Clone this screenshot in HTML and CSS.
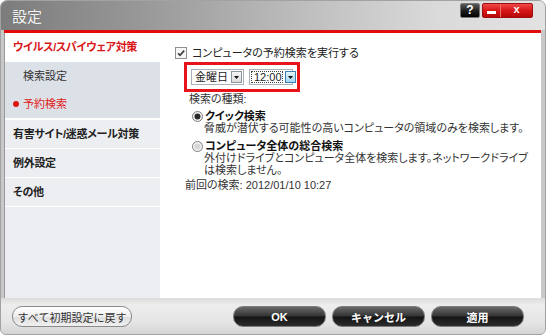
FILE: index.html
```html
<!DOCTYPE html>
<html lang="ja">
<head>
    <meta charset="UTF-8">
    <title>設定</title>
    <link rel="stylesheet" href="styles.css">
</head>
<body>
<div class="window">
    <div class="titlebar">
        <span class="title">設定</span>
        <div class="title-buttons">
            <span class="tb-help">?</span>
            <div class="tb-red">
                <span class="tb-min"><span class="bar"></span></span>
                <span class="tb-close">x</span>
            </div>
        </div>
    </div>

    <div class="main">
        <nav class="sidebar">
            <div class="nav-item active">ウイルス/スパイウェア対策</div>
            <div class="nav-sub">
                <div class="sub-item">検索設定</div>
                <div class="sub-item current"><span class="dot"></span>予約検索</div>
            </div>
            <div class="nav-item">有害サイト/迷惑メール対策</div>
            <div class="nav-item">例外設定</div>
            <div class="nav-item">その他</div>
        </nav>

        <section class="content">
            <div class="check-row">
                <svg class="checkbox" width="12" height="12" viewBox="0 0 12 12">
                    <rect x="0.5" y="0.5" width="11" height="11" fill="#f6f6f6" stroke="#8e8f8f"/>
                    <path d="M3 6.2 L5 8.4 L9.2 3.6" fill="none" stroke="#3a3a3a" stroke-width="1.6"/>
                </svg>
                <span>コンピュータの予約検索を実行する</span>
            </div>

            <div class="schedule">
                <div class="select day">
                    <span class="value">金曜日</span>
                    <span class="arrow">
                        <svg width="9" height="10" viewBox="0 0 9 10"><path d="M2 4 H7 L4.5 7 Z" fill="#111"/></svg>
                    </span>
                </div>
                <div class="select time">
                    <span class="value focus">12:00</span>
                    <span class="arrow hot">
                        <svg width="9" height="10" viewBox="0 0 9 10"><path d="M2 4 H7 L4.5 7 Z" fill="#111"/></svg>
                    </span>
                </div>
            </div>

            <div class="group-label">検索の種類:</div>

            <div class="option first">
                <div class="option-title">
                    <svg class="radio" width="11" height="11" viewBox="0 0 11 11">
                        <circle cx="5.5" cy="5.5" r="5" fill="#f2f2f2" stroke="#7d7d7d"/>
                        <circle cx="5.5" cy="5.5" r="3" fill="#2a2a2a"/>
                    </svg>
                    <strong>クイック検索</strong>
                </div>
                <p class="option-desc">脅威が潜伏する可能性の高いコンピュータの領域のみを検索します。</p>
            </div>

            <div class="option">
                <div class="option-title">
                    <svg class="radio" width="11" height="11" viewBox="0 0 11 11">
                        <circle cx="5.5" cy="5.5" r="5" fill="#f2f2f2" stroke="#7d7d7d"/>
                        <circle cx="5.5" cy="5.5" r="3" fill="#d6d6d6"/>
                    </svg>
                    <strong>コンピュータ全体の総合検索</strong>
                </div>
                <p class="option-desc">外付けドライブとコンピュータ全体を検索します。ネットワークドライブ<br>は検索しません。</p>
            </div>

            <div class="last-scan">前回の検索: 2012/01/10 10:27</div>
        </section>
    </div>

    <div class="footer">
        <button class="btn-light">すべて初期設定に戻す</button>
        <div class="footer-right">
            <button class="btn-dark">OK</button>
            <button class="btn-dark">キャンセル</button>
            <button class="btn-dark">適用</button>
        </div>
    </div>
</div>
</body>
</html>
```

FILE: styles.css
```css
body {
    margin: 0;
    background: #fff;
    font-family: "Liberation Sans", "Noto Sans CJK JP", sans-serif;
    font-feature-settings: "palt";
    font-size: 11px;
    color: #222;
}

.window {
    width: 546px;
    height: 335px;
    box-sizing: border-box;
    border: 1px solid #a2a2a2;
    border-radius: 7px 7px 6px 6px;
    overflow: hidden;
    background: #c8c8c8;
    display: flex;
    flex-direction: column;
}

/* title bar */
.titlebar {
    height: 29px;
    display: flex;
    background: linear-gradient(90deg, #7c7c7c 0%, #979797 25%, #bdbdbd 55%, #dadada 80%, #e2e2e2 100%);
}

.title {
    padding-left: 11px;
    line-height: 31px;
    font-size: 15px;
    color: #f4f4f4;
    text-shadow: 0 0 1px #666;
}

.title-buttons {
    margin-left: auto;
    margin-right: 12px;
    margin-top: 2px;
    display: flex;
    gap: 2px;
    height: 15px;
}

.tb-help {
    width: 20px;
    height: 15px;
    box-sizing: border-box;
    border: 1px solid #777;
    border-radius: 2px;
    background: linear-gradient(#5a5a5a, #1c1c1c 55%, #000);
    color: #fff;
    font-weight: bold;
    font-size: 12px;
    line-height: 13px;
    text-align: center;
}

.tb-red {
    display: flex;
    width: 51px;
    height: 15px;
    box-sizing: border-box;
    border: 1px solid #9c1010;
    border-radius: 2px;
    background: linear-gradient(#f04a4a, #d81818 50%, #b80808);
}

.tb-min {
    width: 17px;
    border-right: 1px solid #f07070;
    display: flex;
    align-items: center;
    justify-content: center;
}

.tb-min .bar {
    width: 9px;
    height: 3px;
    margin-top: 3px;
    background: #fff;
}

.tb-close {
    flex: 1;
    color: #fff;
    font-weight: bold;
    font-size: 11px;
    line-height: 11px;
    text-align: center;
}

/* main area */
.main {
    display: flex;
    height: 265px;
    margin: 0 4px 0 3px;
    border-top: 3px solid #e10c0c;
}

.sidebar {
    width: 156px;
    background: #eceef1;
    border-left: 1px solid #9a9a9a;
    box-sizing: border-box;
}

.nav-item {
    height: 28px;
    line-height: 28px;
    padding-left: 8px;
    font-weight: bold;
    color: #222;
    border-bottom: 1px solid #fff;
    letter-spacing: -0.3px;
}

.nav-item.active {
    height: 29px;
    line-height: 29px;
    background: #fff;
    color: #d8161a;
    border-bottom: 0;
}

.nav-sub {
    background: #dce1e7;
    border-bottom: 2px solid #fff;
}

.sub-item {
    height: 28px;
    line-height: 28px;
    padding-left: 18px;
    color: #333;
}

.sub-item.current {
    display: flex;
    align-items: center;
    padding-left: 8px;
    color: #e01a1a;
}

.dot {
    width: 6px;
    height: 6px;
    border-radius: 50%;
    background: #e31414;
    margin-right: 4px;
}

.content {
    flex: 1;
    background: #fff;
    padding: 13px 0 0 15px;
    line-height: 12px;
}

.check-row {
    display: flex;
    align-items: center;
    gap: 5px;
    height: 14px;
}

.schedule {
    display: inline-flex;
    gap: 5px;
    margin: 2px 0 0 9px;
    padding: 4px;
    border: 3px solid #e8121a;
}

.select {
    height: 16px;
    box-sizing: border-box;
    border: 1px solid #a9b0b8;
    display: flex;
    align-items: center;
    background: #fff;
}

.select.day {
    width: 53px;
}

.select.time {
    width: 44px;
}

.select .value {
    flex: 1;
    padding-left: 3px;
    line-height: 12px;
}

.select .value.focus {
    margin: 1px 2px 1px 1px;
    padding-left: 2px;
    border: 1px dotted #444;
    line-height: 10px;
}

.arrow {
    width: 11px;
    height: 12px;
    margin-right: 1px;
    box-sizing: border-box;
    border: 1px solid #8e979f;
    background: linear-gradient(#f6f6f6, #dcdcdc);
    display: flex;
    align-items: center;
    justify-content: center;
}

.arrow.hot {
    border-color: #3c7fb1;
    background: linear-gradient(#e6f5fd, #bfe4f8 50%, #a7d9f5);
}

.group-label {
    margin: 1px 0 0 14px;
    color: #333;
}

.option {
    margin: 6px 0 0 17px;
}

.option.first {
    margin-top: 5px;
}

.option-title {
    display: flex;
    align-items: center;
    gap: 2px;
    height: 12px;
}

.option-title strong {
    font-weight: bold;
    color: #111;
}

.option-desc {
    margin: 0;
    padding-left: 12px;
    color: #333;
}

.last-scan {
    margin: 3px 0 0 10px;
    color: #333;
}

/* footer */
.footer {
    flex: 1;
    display: flex;
    align-items: flex-start;
    padding: 8px 21px 0 11px;
    background: linear-gradient(#dcdcdc, #ededed 20%, #e4e4e4 70%, #d4d4d4);
}

.footer-right {
    margin-left: auto;
    display: flex;
    gap: 6px;
}

button {
    height: 21px;
    border-radius: 10px;
    font-family: inherit;
    font-size: 11px;
    padding: 0;
    cursor: pointer;
}

.btn-light {
    width: 120px;
    border: 1px solid #8a8a8a;
    background: linear-gradient(#ffffff, #eeeeee 50%, #dedede 52%, #f0f0f0);
    color: #333;
}

.btn-dark {
    width: 93px;
    border: 1px solid #7c7c7c;
    background: linear-gradient(#6a6a6a, #333 48%, #141414 52%, #2c2c2c);
    color: #fff;
    font-weight: bold;
}
```
